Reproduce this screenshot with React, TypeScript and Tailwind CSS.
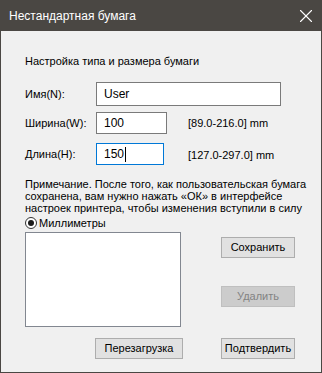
import { X } from 'lucide-react'

const font = { fontFamily: '"Liberation Sans", Arial, sans-serif' }

function Btn({ label, disabled, className }: { label: string; disabled?: boolean; className?: string }) {
  return (
    <button
      type="button"
      className={
        'h-[21px] flex items-center justify-center border text-[11px] leading-none ' +
        (disabled
          ? 'bg-[#cccccc] border-[#bfbfbf] text-[#838383] '
          : 'bg-[#e1e1e1] border-[#adadad] text-black ') +
        (className ?? '')
      }
    >
      {label}
    </button>
  )
}

export default function App() {
  return (
    <div
      className="w-[322px] h-[373px] border border-[#4a4743] bg-[#f0f0f0] flex flex-col text-black text-[11px]"
      style={font}
    >
      {/* Title bar */}
      <div className="h-[30px] bg-[#4a4743] flex items-center justify-between pl-[8px] pr-[4px] shrink-0">
        <span className="text-white text-[12px]">Нестандартная бумага</span>
        <X className="w-[22px] h-[22px] text-white" strokeWidth={1.2} />
      </div>

      <div className="pl-[24px] flex flex-col">
        <div className="mt-[22px] leading-[16px]">Настройка типа и размера бумаги</div>

        <div className="mt-[13px] flex items-center h-[24px]">
          <span className="w-[71px]">Имя(N):</span>
          <div className="w-[185px] h-[24px] bg-white border border-[#7a7a7a] flex items-center pl-[7px] text-[12px]">User</div>
        </div>

        <div className="mt-[6px] flex items-center h-[22px]">
          <span className="w-[71px]">Ширина(W):</span>
          <div className="w-[71px] h-[22px] bg-white border border-[#7a7a7a] flex items-center pl-[7px] text-[12px]">100</div>
          <span className="ml-[21px]">[89.0-216.0] mm</span>
        </div>

        <div className="mt-[9px] flex items-center h-[22px]">
          <span className="w-[71px]">Длина(H):</span>
          <div className="w-[68px] h-[22px] bg-white border border-[#0078d7] flex items-center pl-[7px] text-[12px]">
            150<span className="inline-block w-px h-[15px] bg-black ml-[1px]" />
          </div>
          <span className="ml-[24px] mt-[2px]">[127.0-297.0] mm</span>
        </div>

        <div className="mt-[13px] leading-[12px] whitespace-nowrap">
          <div>Примечание. После того, как пользовательская бумага</div>
          <div>сохранена, вам нужно нажать «ОК» в интерфейсе</div>
          <div>настроек принтера, чтобы изменения вступили в силу</div>
        </div>

        <div className="mt-[1px] flex items-center h-[16px]">
          <span className="w-[12px] h-[12px] rounded-full border border-[#333333] bg-white flex items-center justify-center">
            <span className="w-[6px] h-[6px] rounded-full bg-[#1a1a1a]" />
          </span>
          <span className="ml-[2px]">Миллиметры</span>
        </div>

        <div className="mt-[1px] flex">
          <div className="w-[156px] h-[95px] bg-white border border-[#828790]" />
          <div className="ml-[40px] flex flex-col">
            <Btn label="Сохранить" className="mt-[5px] w-[74px]" />
            <Btn label="Удалить" disabled className="mt-[28px] w-[74px]" />
          </div>
        </div>

        <div className="mt-[11px] flex">
          <Btn label="Перезагрузка" className="ml-[70px] w-[88px]" />
          <Btn label="Подтвердить" className="ml-[38px] w-[74px]" />
        </div>
      </div>
    </div>
  )
}
